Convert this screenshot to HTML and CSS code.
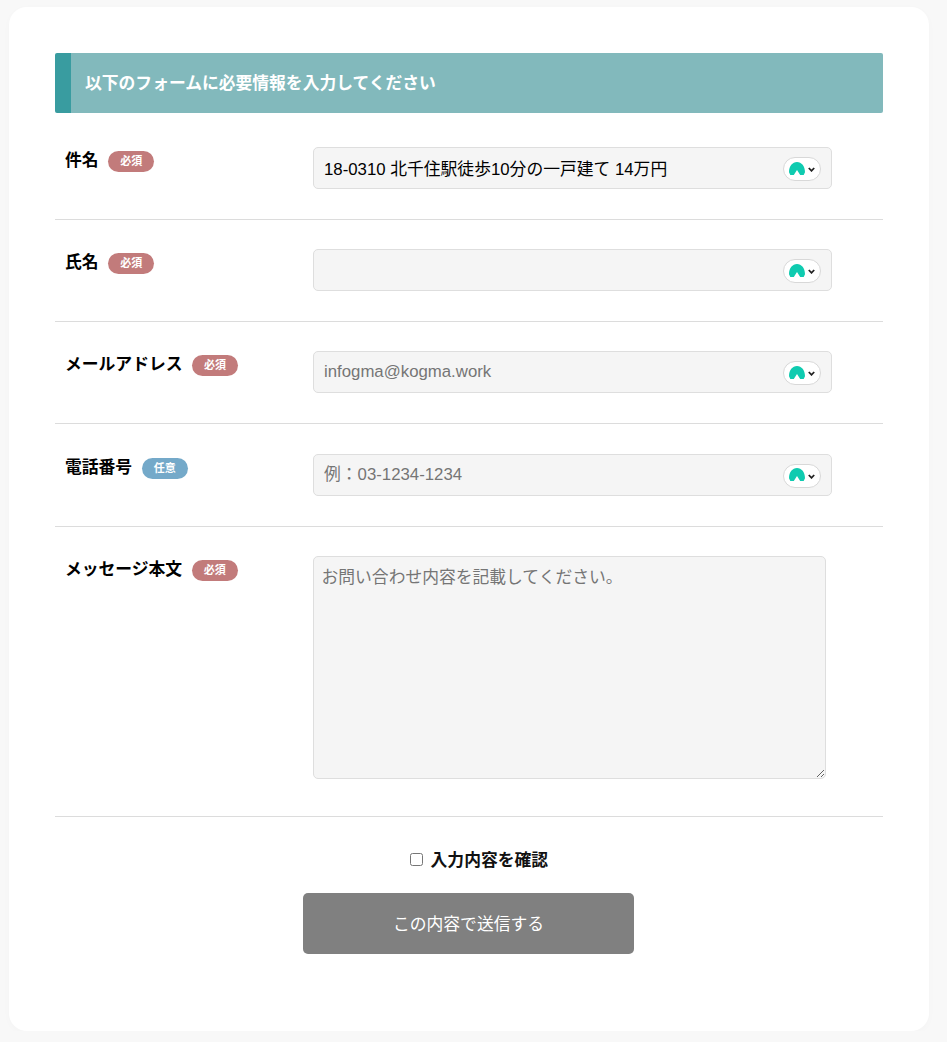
FILE: index.html
```html
<!DOCTYPE html>
<html lang="ja">
<head>
<meta charset="utf-8">
<title>お問い合わせ</title>
<link rel="stylesheet" href="styles.css">
</head>
<body>
<div class="card">
  <form class="contactForm">
    <h2 class="formTitle">以下のフォームに必要情報を入力してください</h2>

    <div class="formRow">
      <div class="rowLabel"><b>件名</b> <span class="badge required">必須</span></div>
      <div class="inputWrap">
        <input class="textInput" type="text" value="18-0310 北千住駅徒歩10分の一戸建て 14万円">
        <span class="passBtn"><svg class="passLogo" viewBox="0 0 16 13"><path d="M0 10.2C0 4.2 3.5 0 8 0S16 4.2 16 10.2L14.7 13H11.2L8 8L4.8 13H1.3Z"/></svg><svg class="passArrow" viewBox="0 0 7 5"><path d="M.8 1L3.5 3.8L6.2 1"/></svg></span>
      </div>
    </div>

    <div class="formRow">
      <div class="rowLabel"><b>氏名</b> <span class="badge required">必須</span></div>
      <div class="inputWrap">
        <input class="textInput" type="text">
        <span class="passBtn"><svg class="passLogo" viewBox="0 0 16 13"><path d="M0 10.2C0 4.2 3.5 0 8 0S16 4.2 16 10.2L14.7 13H11.2L8 8L4.8 13H1.3Z"/></svg><svg class="passArrow" viewBox="0 0 7 5"><path d="M.8 1L3.5 3.8L6.2 1"/></svg></span>
      </div>
    </div>

    <div class="formRow">
      <div class="rowLabel"><b>メールアドレス</b> <span class="badge required">必須</span></div>
      <div class="inputWrap">
        <input class="textInput" type="text" placeholder="infogma@kogma.work">
        <span class="passBtn"><svg class="passLogo" viewBox="0 0 16 13"><path d="M0 10.2C0 4.2 3.5 0 8 0S16 4.2 16 10.2L14.7 13H11.2L8 8L4.8 13H1.3Z"/></svg><svg class="passArrow" viewBox="0 0 7 5"><path d="M.8 1L3.5 3.8L6.2 1"/></svg></span>
      </div>
    </div>

    <div class="formRow">
      <div class="rowLabel"><b>電話番号</b> <span class="badge optional">任意</span></div>
      <div class="inputWrap">
        <input class="textInput" type="text" placeholder="例：03-1234-1234">
        <span class="passBtn"><svg class="passLogo" viewBox="0 0 16 13"><path d="M0 10.2C0 4.2 3.5 0 8 0S16 4.2 16 10.2L14.7 13H11.2L8 8L4.8 13H1.3Z"/></svg><svg class="passArrow" viewBox="0 0 7 5"><path d="M.8 1L3.5 3.8L6.2 1"/></svg></span>
      </div>
    </div>

    <div class="formRow">
      <div class="rowLabel"><b>メッセージ本文</b> <span class="badge required">必須</span></div>
      <textarea class="textArea" placeholder="お問い合わせ内容を記載してください。"></textarea>
    </div>

    <div class="confirmLine">
      <label><input class="confirmBox" type="checkbox"> 入力内容を確認</label>
    </div>
    <button class="sendBtn" type="button">この内容で送信する</button>
  </form>
</div>
</body>
</html>
```

FILE: styles.css
```css
html, body {
  margin: 0;
  padding: 0;
}
body {
  background-color: #f8f8f8;
  font-family: "Liberation Sans", "Noto Sans CJK JP", sans-serif;
  font-size: 16.8px;
  color: #111;
}
.card {
  width: 920px;
  height: 1024px;
  margin: 7px 0 0 9px;
  padding: 46px 46px 0 46px;
  box-sizing: border-box;
  background-color: white;
  border-radius: 18px;
  box-shadow: 0 2px 8px rgba(0, 0, 0, 0.02);
}
.formTitle {
  margin: 0;
  height: 60px;
  padding-left: 14px;
  line-height: 62px;
  font-size: 16.8px;
  font-weight: 700;
  color: white;
  background-color: #82b9bc;
  border-left: 16px solid #399ca0;
  border-radius: 2px;
}
.formRow {
  display: flex;
  align-items: flex-start;
  padding: 29.2px 0 30px 0;
  border-bottom: 1px solid #dcdcdc;
}
.formRow:nth-of-type(1) {
  padding-top: 34px;
}
.rowLabel {
  width: 258px;
  padding-left: 10px;
  box-sizing: border-box;
  display: flex;
  align-items: flex-start;
  gap: 9.6px;
  color: black;
}
.rowLabel b {
  line-height: 28px;
}
.badge {
  width: 46px;
  height: 21px;
  line-height: 21px;
  margin-top: 4px;
  border-radius: 11px;
  text-align: center;
  font-size: 11px;
  font-weight: 700;
  color: white;
}
.required {
  background-color: #c27b7b;
}
.optional {
  background-color: #74a9c9;
}
.inputWrap {
  position: relative;
  width: 519px;
}
.textInput {
  display: block;
  width: 100%;
  height: 42px;
  box-sizing: border-box;
  padding: 0 50px 0 10px;
  font: inherit;
  color: black;
  background-color: #f5f5f5;
  border: 1px solid #dedede;
  border-radius: 5px;
}
.textInput::placeholder, .textArea::placeholder {
  color: #757575;
}
.passBtn {
  position: absolute;
  top: 10px;
  right: 11px;
  width: 38px;
  height: 24px;
  box-sizing: border-box;
  display: flex;
  align-items: center;
  padding-left: 5px;
  background-color: white;
  border: 1px solid #d8d8d8;
  border-radius: 12px;
}
.passLogo {
  width: 16px;
  height: 13px;
  margin-bottom: 2px;
  fill: #0fcbb0;
}
.passArrow {
  width: 7px;
  height: 5px;
  margin-left: 3px;
  margin-top: 1px;
  fill: none;
  stroke: #222;
  stroke-width: 1.8;
}
.textArea {
  display: block;
  width: 513px;
  height: 223px;
  margin-bottom: 7.2px;
  box-sizing: border-box;
  padding: 7px 7.5px;
  font: inherit;
  background-color: #f5f5f5;
  border: 1px solid #dedede;
  border-radius: 5px;
}
.confirmLine {
  margin-top: 32px;
  padding-left: 20px;
  text-align: center;
  font-weight: 700;
  line-height: 24px;
}
.confirmBox {
  margin: 0 3px 0 0;
  width: 13px;
  height: 13px;
}
.sendBtn {
  display: block;
  width: 331px;
  height: 61px;
  margin: 20px 0 0 248px;
  font: inherit;
  color: white;
  background-color: #808080;
  border: none;
  border-radius: 5px;
}
```
